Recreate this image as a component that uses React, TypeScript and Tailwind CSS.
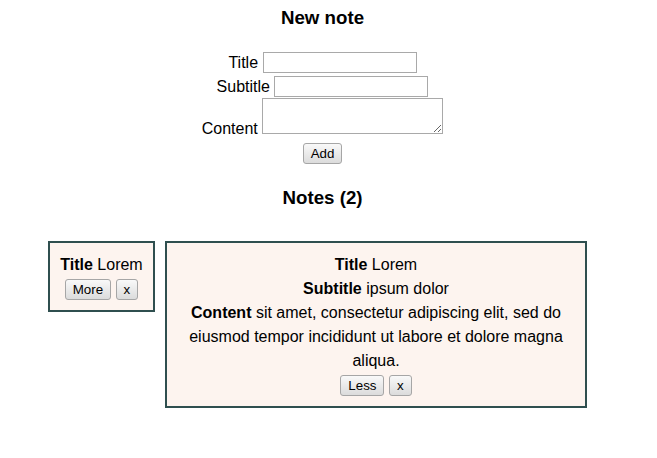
import React from 'react';

interface Note {
  title: string;
  subtitle: string;
  content: string;
  expanded: boolean;
}

const notes: Note[] = [
  { title: 'Lorem', subtitle: 'ipsum dolor', content: 'sit amet, consectetur adipiscing elit, sed do eiusmod tempor incididunt ut labore et dolore magna aliqua.', expanded: false },
  { title: 'Lorem', subtitle: 'ipsum dolor', content: 'sit amet, consectetur adipiscing elit, sed do eiusmod tempor incididunt ut labore et dolore magna aliqua.', expanded: true },
];

const btn =
  'h-[21px] px-[7px] text-[13.333px] leading-[15px] text-black border border-[#a6a6a6] rounded-[3px] bg-linear-to-b from-[#f9f9f9] to-[#dcdcdc]';

const field = 'h-[21px] bg-white border border-[#a9a9a9]';

const NoteCard: React.FC<{ note: Note }> = ({ note }) => (
  <div
    className={`border-2 border-[#2f4f4f] bg-[#fdf4ef] px-[10px] pt-[10px] pb-[10px] text-center text-[16px] leading-[24px] ${
      note.expanded ? 'w-[422px]' : 'w-[107px]'
    }`}
  >
    <div>
      <b>Title</b> {note.title}
    </div>
    {note.expanded && (
      <>
        <div>
          <b>Subtitle</b> {note.subtitle}
        </div>
        <p>
          <b>Content</b> {note.content}
        </p>
      </>
    )}
    <div className="mt-[2px] flex justify-center gap-[4.5px]">
      <button className={btn}>{note.expanded ? 'Less' : 'More'}</button>
      <button className={btn}>x</button>
    </div>
  </div>
);

export default function App() {
  return (
    <div className="w-[645px] h-[458px] bg-white text-black font-['Liberation_Sans',Arial,sans-serif]">
      {/* New note form */}
      <h3 className="pt-[6.5px] text-center text-[18.72px] font-bold leading-[22px]">New note</h3>

      <div className="mt-[23.5px] flex justify-center items-baseline gap-[4.5px] text-[16px] leading-[18px]">
        <label>Title</label>
        <input type="text" className={`w-[154px] ${field}`} />
      </div>
      <div className="mt-[3px] flex justify-center items-baseline gap-[4.5px] text-[16px] leading-[18px]">
        <label>Subtitle</label>
        <input type="text" className={`w-[154px] ${field}`} />
      </div>
      <div className="mt-[1px] flex justify-center items-end gap-[4.5px] text-[16px] leading-[16px]">
        <label className="mb-[-3px]">Content</label>
        <textarea className="w-[181px] h-[36px] bg-white border border-[#a9a9a9]" />
      </div>
      <div className="mt-[9px] flex justify-center">
        <button className={btn}>Add</button>
      </div>

      {/* Notes list */}
      <h3 className="mt-[22.5px] text-center text-[18.72px] font-bold leading-[22px]">Notes ({notes.length})</h3>

      <div className="mt-[32.5px] pl-[48px] flex items-start gap-[10px]">
        {notes.map((n, i) => (
          <NoteCard key={i} note={n} />
        ))}
      </div>
    </div>
  );
}
